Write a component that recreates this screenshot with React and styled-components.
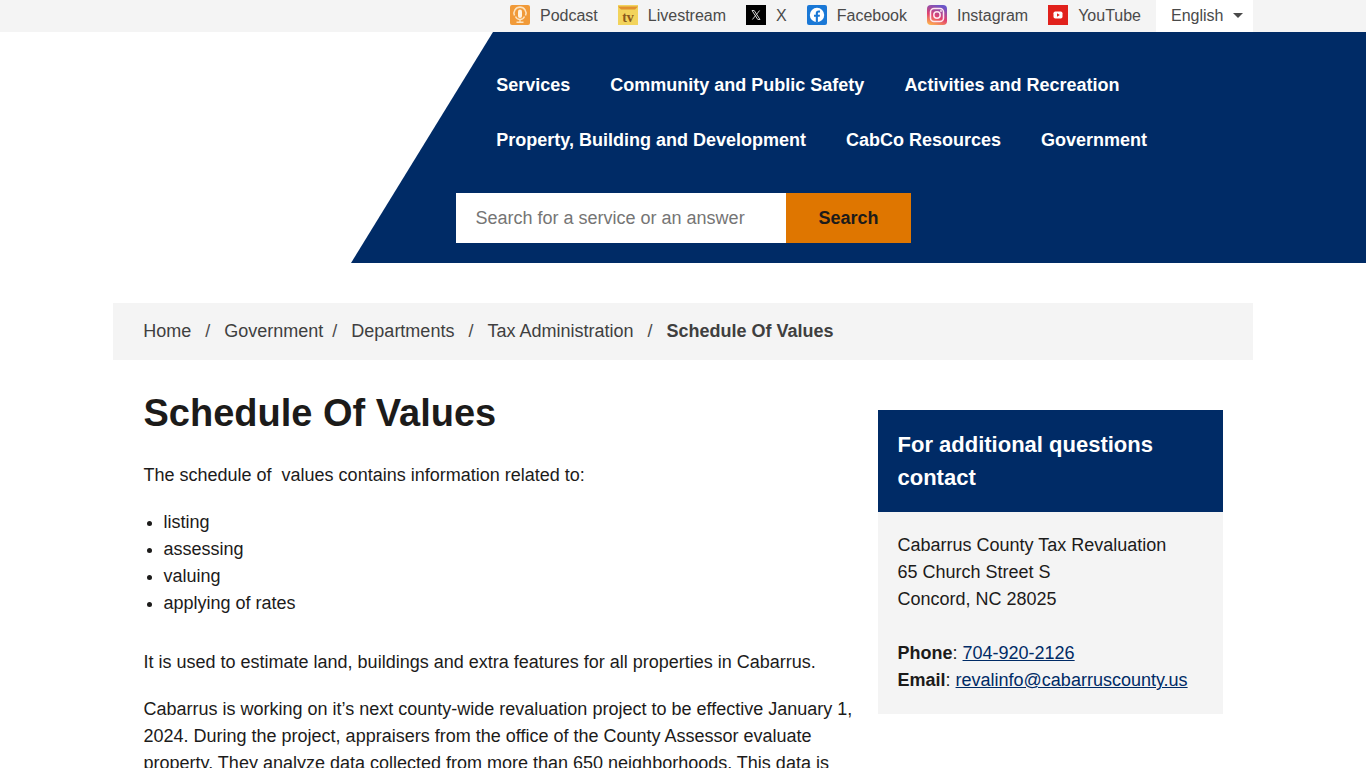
import styled, { createGlobalStyle } from "styled-components";

const GlobalStyle = createGlobalStyle`
  html, body {
    margin: 0;
    padding: 0;
    height: 768px;
    overflow: hidden;
    background: #fff;
    font-family: "Liberation Sans", Arial, sans-serif;
    font-size: 18px;
    line-height: 27px;
    color: #1c1b1a;
  }
`;

const PodcastIcon = () => (
  <svg width="20" height="20" viewBox="0 0 20 20">
    <rect width="20" height="20" rx="2" fill="#f19a38" />
    <path d="M4.500 10.500a6 6 0 1 1 11 0" fill="none" stroke="#fde3bf" strokeWidth="1.600" />
    <rect x="8" y="4.500" width="4" height="8.500" rx="2" fill="#fff3e0" />
    <path d="M5.500 11.500c.8 2 2.500 3 4.500 3s3.700-1 4.500-3M10 14.500v2M6.500 17.300h7" fill="none" stroke="#fde3bf" strokeWidth="1.400" />
  </svg>
);

const LivestreamIcon = () => (
  <svg width="20" height="20" viewBox="0 0 20 20">
    <rect width="20" height="20" fill="#f2d35b" />
    <path d="M0 1.500h20l-3 3H3z" fill="#e0912f" />
    <text x="10" y="16.500" textAnchor="middle" fontFamily="'Liberation Serif', serif" fontWeight="700" fontSize="14" fill="#8a5a1c">tv</text>
  </svg>
);

const XIcon = () => (
  <svg width="20" height="20" viewBox="0 0 20 20">
    <rect width="20" height="20" fill="#000" />
    <path d="M6 5.500h2.200l5.800 9h-2.200zM13.600 5.500L6.400 14.500" fill="none" stroke="#cfcfcf" strokeWidth="1" />
  </svg>
);

const FacebookIcon = () => (
  <svg width="20" height="20" viewBox="0 0 20 20">
    <rect width="20" height="20" rx="2" fill="#1a78d6" />
    <circle cx="10" cy="10" r="7.200" fill="#fff" />
    <path d="M10.900 17.300v-5.500h1.800l.3-2.100h-2.100V8.500c0-.7.3-1.100 1.100-1.100H13V5.600c-.4-.1-.9-.1-1.400-.1-1.700 0-2.800 1-2.800 2.800v1.400H7v2.100h1.800v5.500z" fill="#1a78d6" />
  </svg>
);

const InstagramIcon = () => (
  <svg width="20" height="20" viewBox="0 0 20 20">
    <defs>
      <linearGradient id="ig" x1="0.2" y1="1" x2="0.6" y2="0">
        <stop offset="0" stopColor="#fdb24f" />
        <stop offset="0.45" stopColor="#e1416f" />
        <stop offset="1" stopColor="#6a55c9" />
      </linearGradient>
    </defs>
    <rect width="20" height="20" rx="4" fill="url(#ig)" />
    <rect x="3.500" y="3.500" width="13" height="13" rx="3.500" fill="none" stroke="#fde7ef" strokeWidth="1.500" />
    <circle cx="10" cy="10" r="3.200" fill="none" stroke="#fde7ef" strokeWidth="1.500" />
    <circle cx="14" cy="6" r="0.900" fill="#fde7ef" />
  </svg>
);

const YoutubeIcon = () => (
  <svg width="20" height="20" viewBox="0 0 20 20">
    <rect width="20" height="20" fill="#e1211c" />
    <rect x="5.500" y="6.500" width="9" height="7" rx="1.800" fill="#fff" />
    <path d="M9 8.300l2.800 1.700L9 11.700z" fill="#e1211c" />
  </svg>
);

const socials = [
  { label: "Podcast", Icon: PodcastIcon },
  { label: "Livestream", Icon: LivestreamIcon },
  { label: "X", Icon: XIcon },
  { label: "Facebook", Icon: FacebookIcon },
  { label: "Instagram", Icon: InstagramIcon },
  { label: "YouTube", Icon: YoutubeIcon },
];

function App() {
  return (
    <>
      <GlobalStyle />
      <TopBar>
        <TopInner>
          {socials.map(({ label, Icon }) => (
            <SocialLink key={label} href="#">
              <Icon />
              <span>{label}</span>
            </SocialLink>
          ))}
          <LangSelect>
            <span>English</span>
            <Caret />
          </LangSelect>
        </TopInner>
      </TopBar>
      <Header>
        <NavPanel>
          <NavRow>
            <NavLink href="#">Services</NavLink>
            <NavLink href="#">Community and Public Safety</NavLink>
            <NavLink href="#">Activities and Recreation</NavLink>
          </NavRow>
          <NavRow>
            <NavLink href="#">Property, Building and Development</NavLink>
            <NavLink href="#">CabCo Resources</NavLink>
            <NavLink href="#">Government</NavLink>
          </NavRow>
          <SearchForm>
            <SearchInput placeholder="Search for a service or an answer" />
            <SearchButton type="button">Search</SearchButton>
          </SearchForm>
        </NavPanel>
      </Header>
      <Container>
        <Breadcrumb>
          <Crumb href="#">Home</Crumb>
          <Sep $before={14} $after={14}>/</Sep>
          <Crumb href="#">Government</Crumb>
          <Sep $before={9} $after={14}>/</Sep>
          <Crumb href="#">Departments</Crumb>
          <Sep $before={14} $after={14}>/</Sep>
          <Crumb href="#">Tax Administration</Crumb>
          <Sep $before={14} $after={14}>/</Sep>
          <Current>Schedule Of Values</Current>
        </Breadcrumb>
        <Columns>
          <Main>
            <Title>Schedule Of Values</Title>
            <Para>The schedule of&nbsp; values contains information related to:</Para>
            <BulletList>
              <li>listing</li>
              <li>assessing</li>
              <li>valuing</li>
              <li>applying of rates</li>
            </BulletList>
            <Para>It is used to estimate land, buildings and extra features for all properties in Cabarrus.</Para>
            <Para>
              Cabarrus is working on it’s next county-wide revaluation project to be effective January 1, 2024. During
              the project, appraisers from the office of the County Assessor evaluate property. They analyze data
              collected from more than 650 neighborhoods. This data is
            </Para>
          </Main>
          <Aside>
            <AsideHead>For additional questions contact</AsideHead>
            <AsideBody>
              Cabarrus County Tax Revaluation
              <br />
              65 Church Street S
              <br />
              Concord, NC 28025
              <br />
              <br />
              <strong>Phone</strong>: <ContactLink href="#">704-920-2126</ContactLink>
              <br />
              <strong>Email</strong>: <ContactLink href="#">revalinfo@cabarruscounty.us</ContactLink>
            </AsideBody>
          </Aside>
        </Columns>
      </Container>
    </>
  );
}

export default App;

const TopBar = styled.div`
  height: 32px;
  background: #f4f4f4;
`;

const TopInner = styled.div`
  width: 1140px;
  height: 32px;
  margin: 0 auto;
  display: flex;
  justify-content: flex-end;
  align-items: center;
  font-size: 16px;
`;

const SocialLink = styled.a`
  display: flex;
  align-items: center;
  gap: 10px;
  margin-right: 20px;
  color: #4a4a4a;
  text-decoration: none;
  svg { flex: none; margin-top: -2px; }
  span { margin-top: -1px; }
`;

const LangSelect = styled.div`
  width: 97px;
  height: 32px;
  box-sizing: border-box;
  margin-left: -5px;
  padding-left: 15px;
  display: flex;
  align-items: center;
  background: #fff;
  color: #4a4a4a;
  span { margin-top: -2px; }
`;

const Caret = styled.span`
  margin-left: 10px;
  border-left: 5px solid transparent;
  border-right: 5px solid transparent;
  border-top: 5px solid #4a4a4a;
`;

const Header = styled.header`
  display: flex;
  justify-content: flex-end;
  height: 231px;
`;

const NavPanel = styled.nav`
  width: 1015px;
  height: 231px;
  box-sizing: border-box;
  padding: 26px 0 0 145.25px;
  background: #002b66;
  clip-path: polygon(142px 0, 100% 0, 100% 100%, 0 100%);
`;

const NavRow = styled.div`
  display: flex;
  gap: 40px;
  height: 55px;
  align-items: center;
`;

const NavLink = styled.a`
  color: #fff;
  font-weight: 700;
  font-size: 18px;
  text-decoration: none;
`;

const SearchForm = styled.form`
  display: flex;
  margin: 25px 0 0 -40.25px;
`;

const SearchInput = styled.input`
  width: 330px;
  height: 50px;
  box-sizing: border-box;
  border: 0;
  padding: 0 20px 0 19.5px;
  font-family: inherit;
  font-size: 18px;
  background: #fff;
  &::placeholder { color: #757575; opacity: 1; }
`;

const SearchButton = styled.button`
  width: 125px;
  height: 50px;
  border: 0;
  background: #df7600;
  color: #1c1b1a;
  font-family: inherit;
  font-size: 18px;
  font-weight: 700;
`;

const Container = styled.div`
  width: 1140px;
  margin: 40px auto 0;
`;

const Breadcrumb = styled.div`
  height: 57px;
  box-sizing: border-box;
  padding-left: 30.25px;
  display: flex;
  align-items: center;
  background: #f4f4f4;
  color: #4a4a4a;
`;

const Crumb = styled.a`
  color: #3f3f3f;
  text-decoration: none;
`;

const Sep = styled.span`
  margin: 0 ${(p) => p.$after}px 0 ${(p) => p.$before}px;
`;

const Current = styled.span`
  font-weight: 700;
  color: #3f3f3f;
`;

const Columns = styled.div`
  display: flex;
  padding: 0 30px 0 30.5px;
  justify-content: space-between;
`;

const Main = styled.main`
  width: 712px;
`;

const Title = styled.h1`
  margin: 30px 0 26px;
  font-size: 38px;
  line-height: 46px;
  font-weight: 700;
`;

const Para = styled.p`
  margin: 0 0 20px;
`;

const BulletList = styled.ul`
  margin: 0 0 32px;
  padding-left: 20px;
`;

const Aside = styled.aside`
  width: 345px;
  margin-top: 50px;
`;

const AsideHead = styled.h2`
  margin: 0;
  padding: 18px 20px 18px 19.5px;
  background: #002b66;
  color: #fff;
  font-size: 22px;
  line-height: 33px;
`;

const AsideBody = styled.div`
  padding: 20px 20px 20px 19.5px;
  background: #f4f4f4;
`;

const ContactLink = styled.a`
  color: #002b66;
  text-decoration: underline;
`;
